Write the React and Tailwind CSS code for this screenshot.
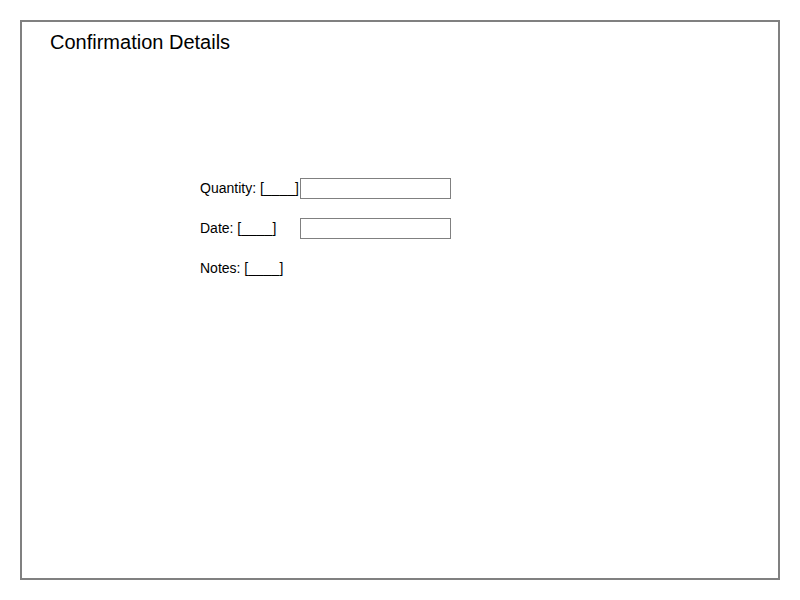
export default function App() {
  return (
    <div className="w-[800px] h-[600px] bg-white p-[20px]" style={{ fontFamily: '"Liberation Sans", Arial, sans-serif' }}>
      <div className="w-[760px] h-[560px] border-2 border-[#808080] box-border">
        <div className="pl-[28px] pt-[8px] text-[20px] leading-[24px] text-black">Confirmation Details</div>
        <div className="pl-[178px] pt-[124px] flex flex-col gap-[19px] text-[14px] text-black">
          <div className="flex items-center h-[21px]">
            <span className="w-[100px] shrink-0 whitespace-nowrap">Quantity: [____]</span>
            <div className="w-[151px] h-[21px] border border-[#808080] bg-white"></div>
          </div>
          <div className="flex items-center h-[21px]">
            <span className="w-[100px] shrink-0 whitespace-nowrap">Date: [____]</span>
            <div className="w-[151px] h-[21px] border border-[#808080] bg-white"></div>
          </div>
          <div className="flex items-center h-[21px]">
            <span className="w-[100px] shrink-0 whitespace-nowrap">Notes: [____]</span>
          </div>
        </div>
      </div>
    </div>
  );
}
